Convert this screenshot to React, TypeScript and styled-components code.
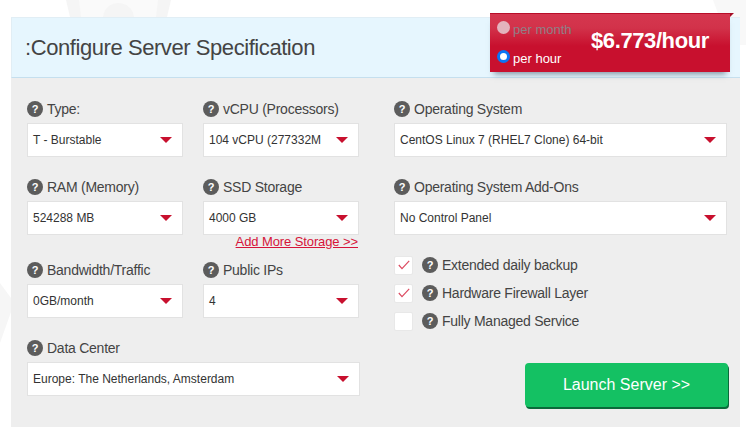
import React from "react";
import styled, { createGlobalStyle } from "styled-components";

const Global = createGlobalStyle`
  html, body { margin: 0; padding: 0; background: #fff; }
  body { width: 746px; height: 433px; overflow: hidden; font-family: "Liberation Sans", Arial, sans-serif; }
`;

const Page = styled.div`
  position: relative;
  width: 746px;
  height: 433px;
  padding: 17px 6px 6px 11px;
  box-sizing: border-box;
`;

const Watermark = styled.svg`
  position: absolute;
  left: 0;
  top: 0;
  pointer-events: none;
`;

const Panel = styled.div`
  position: relative;
  width: 729px;
  height: 410px;
  background: #eee;
  box-sizing: border-box;
`;

const Header = styled.div`
  height: 61px;
  box-sizing: border-box;
  background: #e6f6fe;
  border: 1px solid #e1eef5;
  border-bottom: 1px solid #c5dfee;
  border-right: none;
  padding: 16px 0 0 13px;
`;

const Title = styled.h2`
  margin: 0;
  font-size: 22px;
  line-height: 28px;
  font-weight: 400;
  letter-spacing: -0.43px;
  color: #444;
`;

const Ribbon = styled.div`
  position: absolute;
  left: 479px;
  top: -4px;
  width: 240px;
  height: 59px;
  display: flex;
  background: linear-gradient(#d5374f 0, #d2324a 14px, #c8102e 32px, #c8102e 100%);
  border-top: 1px solid #b80e29;
  box-sizing: border-box;
  box-shadow: 0 6px 6px -4px rgba(40, 60, 80, 0.55);
  &::after {
    content: "";
    position: absolute;
    right: -4px;
    top: -1px;
    border-top: 4px solid #a50c25;
    border-right: 4px solid transparent;
  }
`;

const Periods = styled.div`
  width: 93px;
  padding: 8px 0 0 7px;
  box-sizing: border-box;
  display: flex;
  flex-direction: column;
  gap: 15px;
`;

const Period = styled.label<{ $active?: boolean }>`
  display: flex;
  align-items: center;
  height: 14px;
  font-size: 13px;
  color: ${(p) => (p.$active ? "#fff" : "#8f7f86")};
`;

const Radio = styled.span<{ $active?: boolean }>`
  width: 13px;
  height: 13px;
  margin: 0 3px 4px 0;
  box-sizing: border-box;
  border-radius: 50%;
  flex: none;
  background: ${(p) => (p.$active ? "#fff" : "#e3b3bd")};
  border: ${(p) => (p.$active ? "3px solid #0b75f5" : "none")};
`;

const Price = styled.div`
  padding: 14px 0 0 8px;
  font-size: 22px;
  line-height: 26px;
  font-weight: 700;
  letter-spacing: -0.4px;
  color: #fff;
  white-space: nowrap;
`;

const Body = styled.div`
  display: flex;
  padding: 21px 0 0 16px;
`;

const LeftColumn = styled.div`
  width: 333px;
  margin-right: 34px;
`;

const Grid = styled.div`
  display: grid;
  grid-template-columns: 156px 156px;
  column-gap: 20px;
`;

const Field = styled.div<{ $bottom?: number }>`
  margin-bottom: ${(p) => p.$bottom ?? 20}px;
  position: relative;
`;

const RightColumn = styled.div`
  width: 333px;
`;

const Label = styled.div`
  display: flex;
  align-items: center;
  height: 20px;
  margin-bottom: 4px;
  font-size: 14px;
  letter-spacing: -0.25px;
  color: #444;
  white-space: nowrap;
`;

const Help = styled.span`
  width: 16px;
  height: 16px;
  margin-right: 4px;
  flex: none;
  border-radius: 50%;
  background: #5c5c5c;
  color: #fff;
  font-size: 11px;
  font-weight: 700;
  letter-spacing: 0;
  line-height: 16px;
  text-align: center;
`;

const Select = styled.div`
  height: 34px;
  box-sizing: border-box;
  background: #fff;
  border: 1px solid #e2e2e2;
  padding-left: 5px;
  display: flex;
  align-items: center;
  justify-content: space-between;
  font-size: 12px;
  color: #333;
  white-space: nowrap;
`;

const Arrow = styled.span`
  width: 0;
  height: 0;
  margin-right: 10px;
  border-left: 6px solid transparent;
  border-right: 6px solid transparent;
  border-top: 6px solid #c8102e;
`;

const MoreLink = styled.a`
  position: absolute;
  right: 1px;
  top: 58px;
  font-size: 13px;
  line-height: 14px;
  letter-spacing: -0.1px;
  color: #d6143a;
  text-decoration: underline;
  white-space: nowrap;
`;

const Checks = styled.div`
  display: flex;
  flex-direction: column;
  gap: 8px;
`;

const CheckRow = styled.div`
  display: flex;
  align-items: center;
  height: 20px;
  font-size: 14px;
  letter-spacing: -0.25px;
  color: #444;
  white-space: nowrap;
`;

const Box = styled.span`
  width: 19px;
  height: 19px;
  margin-right: 9px;
  box-sizing: border-box;
  flex: none;
  border: 1px solid #e8e8e8;
  border-radius: 2px;
  background: #fff;
  display: flex;
  align-items: center;
  justify-content: center;
`;

const Launch = styled.button`
  display: block;
  width: 203px;
  height: 44px;
  margin: 32px 0 0 131px;
  border: none;
  border-radius: 4px;
  background: #14c163;
  box-shadow: 1px 2px 0 #0a6b3a;
  color: #fff;
  font-family: inherit;
  font-size: 16px;
`;

const Q = () => <Help>?</Help>;

const Tick = () => (
  <svg width="12" height="10" viewBox="0 0 12 10" fill="none">
    <path d="M0.8 5 L4 8.6 L11.2 0.8" stroke="#dc4a60" strokeWidth="1.2" />
  </svg>
);

const Dropdown = ({ value }: { value: string }) => (
  <Select>
    {value}
    <Arrow />
  </Select>
);

const Item = ({ label, value, bottom, children }: { label: string; value: string; bottom?: number; children?: React.ReactNode }) => (
  <Field $bottom={bottom}>
    <Label><Q />{label}</Label>
    <Dropdown value={value} />
    {children}
  </Field>
);

export default function App() {
  return (
    <Page>
      <Global />
      <Watermark width="746" height="433" viewBox="0 0 746 433">
        <path d="M66 0 L70 17 L167 17 L171 0 Z" fill="#f5f5f5" />
        <path d="M79 0 L81 17 L156 17 L158 0 Z" fill="#fafafa" />
        <path d="M103 17 C104 7 112 3 118 3 C126 3 133 8 134 17 Z" fill="#f5f5f5" />
        <path d="M0 283 L11 298 L11 312 L0 343 Z" fill="#f6f6f6" />
        <path d="M713 0 L746 0 L746 45 L730 45 Z" fill="#f8f8f8" />
      </Watermark>
      <Panel>
        <Header><Title>:Configure Server Specification</Title></Header>
        <Ribbon>
          <Periods>
            <Period><Radio />per month</Period>
            <Period $active><Radio $active />per hour</Period>
          </Periods>
          <Price>$6.773/hour</Price>
        </Ribbon>
        <Body>
          <LeftColumn>
            <Grid>
              <Item label="Type:" value="T - Burstable" />
              <Item label="vCPU (Processors)" value="104 vCPU (277332M" />
              <Item label="RAM (Memory)" value="524288 MB" bottom={25} />
              <Item label="SSD Storage" value="4000 GB" bottom={25}>
                <MoreLink>Add More Storage &gt;&gt;</MoreLink>
              </Item>
              <Item label="Bandwidth/Traffic" value="0GB/month" />
              <Item label="Public IPs" value="4" />
            </Grid>
            <Item label="Data Center" value="Europe: The Netherlands, Amsterdam" />
          </LeftColumn>
          <RightColumn>
            <Item label="Operating System" value="CentOS Linux 7 (RHEL7 Clone) 64-bit" />
            <Item label="Operating System Add-Ons" value="No Control Panel" />
            <Checks>
              <CheckRow><Box><Tick /></Box><Q />Extended daily backup</CheckRow>
              <CheckRow><Box><Tick /></Box><Q />Hardware Firewall Layer</CheckRow>
              <CheckRow><Box /><Q />Fully Managed Service</CheckRow>
            </Checks>
            <Launch>Launch Server &gt;&gt;</Launch>
          </RightColumn>
        </Body>
      </Panel>
    </Page>
  );
}
